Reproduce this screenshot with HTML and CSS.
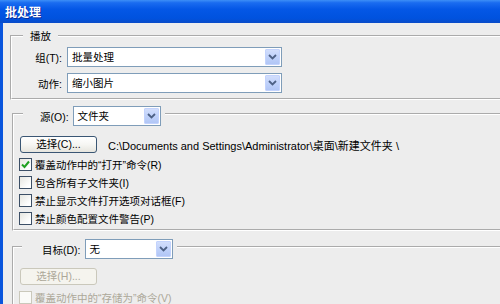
FILE: index.html
```html
<!DOCTYPE html>
<html lang="zh-CN">
<head>
<meta charset="utf-8">
<title>批处理</title>
<link rel="stylesheet" href="styles.css">
</head>
<body>
<div class="window">
  <div class="titlebar">批处理</div>
  <div class="client">
    <fieldset class="group group-play">
      <legend class="legend-text">播放</legend>
      <div class="form-grid">
        <span class="lbl">组(T):</span>
        <div class="select wide"><span class="select-value">批量处理</span><span class="select-btn"><svg width="9" height="6" viewBox="0 0 9 6"><polyline points="1,1 4.5,4.5 8,1" fill="none" stroke="#4d6185" stroke-width="1.8"/></svg></span></div>
        <span class="lbl">动作:</span>
        <div class="select wide"><span class="select-value">缩小图片</span><span class="select-btn"><svg width="9" height="6" viewBox="0 0 9 6"><polyline points="1,1 4.5,4.5 8,1" fill="none" stroke="#4d6185" stroke-width="1.8"/></svg></span></div>
      </div>
    </fieldset>

    <fieldset class="group group-source">
      <legend class="legend-field legend-source">
        <div class="legend-inner"><span class="lbl">源(O):</span><div class="select narrow"><span class="select-value">文件夹</span><span class="select-btn"><svg width="9" height="6" viewBox="0 0 9 6"><polyline points="1,1 4.5,4.5 8,1" fill="none" stroke="#4d6185" stroke-width="1.8"/></svg></span></div></div>
      </legend>
      <div class="group-body body-source">
        <div class="btn-row"><button class="btn" type="button">选择(C)...</button><span class="path">C:\Documents and Settings\Administrator\桌面\新建文件夹 \</span></div>
        <div class="checks">
          <div class="check-row"><span class="checkbox checked"><svg width="11" height="11" viewBox="0 0 11 11"><polyline points="2,5.5 4.5,8 9,2.5" fill="none" stroke="#21a121" stroke-width="2"/></svg></span><span class="check-label">覆盖动作中的“打开”命令(R)</span></div>
          <div class="check-row"><span class="checkbox"></span><span class="check-label">包含所有子文件夹(I)</span></div>
          <div class="check-row"><span class="checkbox"></span><span class="check-label">禁止显示文件打开选项对话框(F)</span></div>
          <div class="check-row"><span class="checkbox"></span><span class="check-label">禁止颜色配置文件警告(P)</span></div>
        </div>
      </div>
    </fieldset>

    <fieldset class="group group-dest">
      <legend class="legend-field legend-dest">
        <div class="legend-inner"><span class="lbl">目标(D):</span><div class="select narrow"><span class="select-value">无</span><span class="select-btn"><svg width="9" height="6" viewBox="0 0 9 6"><polyline points="1,1 4.5,4.5 8,1" fill="none" stroke="#4d6185" stroke-width="1.8"/></svg></span></div></div>
      </legend>
      <div class="group-body body-dest">
        <div class="btn-row"><button class="btn" type="button" disabled>选择(H)...</button></div>
        <div class="checks checks-dest">
          <div class="check-row disabled"><span class="checkbox"></span><span class="check-label">覆盖动作中的“存储为”命令(V)</span></div>
        </div>
      </div>
    </fieldset>
  </div>
</div>
</body>
</html>
```

FILE: styles.css
```css
* { box-sizing: border-box; }

html, body {
  margin: 0;
  padding: 0;
  width: 500px;
  height: 304px;
  overflow: hidden;
  background: #ededed;
}

body {
  font-family: "Liberation Sans", "Noto Sans CJK SC", sans-serif;
  font-size: 10.5px;
  color: #000;
}

.window {
  width: 540px;
  height: 304px;
  display: flex;
  flex-direction: column;
}

.titlebar {
  flex: none;
  height: 23px;
  line-height: 23px;
  padding-left: 5px;
  color: #fff;
  font-family: "Noto Sans CJK SC", sans-serif;
  font-weight: bold;
  font-size: 12px;
  text-shadow: 1px 1px 0 #0a2a9a;
  background: linear-gradient(to bottom, #3d8ff7 0%, #1a6cf0 12%, #0457e6 40%, #0052de 80%, #0a4cc8 100%);
}

.client {
  flex: 1;
  border-left: 3px solid #0a55dd;
  padding-left: 7px;
  background: #ededed;
  display: flex;
  flex-direction: column;
}

.group {
  margin: 0;
  padding: 0;
  border: 2px groove #ffffff;
  min-width: 0;
}

.group-play { margin-top: 5px; }

.group-source {
  margin-top: 2px;
  margin-left: 2px;
}

.group-dest {
  margin-top: 3px;
  margin-left: 2px;
}

.legend-text {
  margin-left: 11px;
  padding: 0 7px;
  line-height: 16px;
}

.legend-field { padding: 0; }

.legend-source {
  margin-left: 9px;
  padding: 4px 4px 0 17px;
}

.legend-dest {
  margin-left: 8px;
  padding: 5px 4px 0 20px;
}

.legend-inner {
  display: flex;
  align-items: center;
  gap: 4px;
}

.form-grid {
  display: grid;
  grid-template-columns: 50px 215px;
  grid-auto-rows: 20px;
  column-gap: 5px;
  row-gap: 6px;
  align-items: center;
  padding: 3px 0 5px 0;
}

.form-grid .lbl { text-align: right; }

.select {
  height: 20px;
  border: 1px solid #7f9db9;
  background: #fff;
  display: flex;
  align-items: stretch;
}

.select.wide { width: 215px; }
.select.narrow { width: 88px; }

.select-value {
  flex: 1;
  padding-left: 4px;
  line-height: 18px;
  white-space: nowrap;
  overflow: hidden;
}

.select-btn {
  flex: none;
  width: 15px;
  margin: 1px;
  border: 1px solid #c3d3fd;
  border-radius: 1px;
  background: linear-gradient(to bottom, #d2defc 0%, #c0d2fa 50%, #b1c6f6 100%);
  display: flex;
  align-items: center;
  justify-content: center;
}

.group-body { display: flex; flex-direction: column; }

.body-source { padding: 10px 0 2px 6px; }
.body-dest { padding: 9px 0 0 6px; }

.btn-row {
  display: flex;
  align-items: center;
  gap: 11px;
  height: 17px;
}

.btn {
  width: 77px;
  height: 17px;
  padding: 0;
  border: 1px solid #3a5674;
  border-radius: 3px;
  background: linear-gradient(to bottom, #ffffff 0%, #f6f6f3 50%, #e6e5de 100%);
  font: inherit;
  color: #000;
  line-height: 15px;
}

.btn:disabled {
  border-color: #cac8bb;
  background: #f5f4ee;
  color: #aca899;
}

.path {
  white-space: nowrap;
  font-size: 11px;
}

.checks {
  display: flex;
  flex-direction: column;
  margin-top: 2px;
  margin-left: -1px;
}

.checks-dest { margin-top: 3px; }

.check-row {
  height: 18px;
  display: flex;
  align-items: center;
  gap: 3px;
}

.checkbox {
  flex: none;
  width: 13px;
  height: 13px;
  border: 1px solid #3c4f66;
  background: linear-gradient(135deg, #e6e6e0 0%, #ffffff 80%);
  display: flex;
  align-items: center;
  justify-content: center;
}

.check-row.disabled .checkbox {
  border-color: #cac8bb;
  background: #fafaf8;
}

.check-row.disabled .check-label { color: #aca899; }
```
